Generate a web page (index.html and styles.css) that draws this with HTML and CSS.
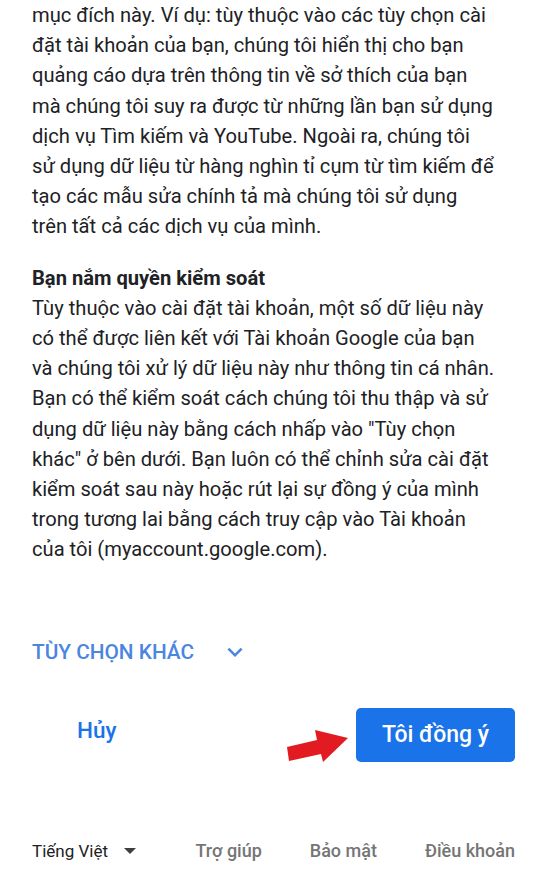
FILE: index.html
```html
<!DOCTYPE html>
<html lang="vi">
<head>
<meta charset="utf-8">
<link rel="stylesheet" href="styles.css">
</head>
<body>
<div class="page">
  <p class="text">mục đích này. Ví dụ: tùy thuộc vào các tùy chọn cài<br>đặt tài khoản của bạn, chúng tôi hiển thị cho bạn<br>quảng cáo dựa trên thông tin về sở thích của bạn<br>mà chúng tôi suy ra được từ những lần bạn sử dụng<br>dịch vụ Tìm kiếm và YouTube. Ngoài ra, chúng tôi<br>sử dụng dữ liệu từ hàng nghìn tỉ cụm từ tìm kiếm để<br>tạo các mẫu sửa chính tả mà chúng tôi sử dụng<br>trên tất cả các dịch vụ của mình.</p>
  <p class="text second"><strong class="heading">Bạn nắm quyền kiểm soát</strong><br>Tùy thuộc vào cài đặt tài khoản, một số dữ liệu này<br>có thể được liên kết với Tài khoản Google của bạn<br>và chúng tôi xử lý dữ liệu này như thông tin cá nhân.<br>Bạn có thể kiểm soát cách chúng tôi thu thập và sử<br>dụng dữ liệu này bằng cách nhấp vào "Tùy chọn<br>khác" ở bên dưới. Bạn luôn có thể chỉnh sửa cài đặt<br>kiểm soát sau này hoặc rút lại sự đồng ý của mình<br>trong tương lai bằng cách truy cập vào Tài khoản<br>của tôi (myaccount.google.com).</p>

  <div class="more">
    <span class="more-label">TÙY CHỌN KHÁC</span>
    <svg class="chevron" width="30" height="30" viewBox="0 0 24 24"><path d="M7.41 8.59 12 13.17l4.59-4.58L18 10l-6 6-6-6z" fill="#4a86e0"/></svg>
  </div>

  <div class="actions">
    <span class="cancel">Hủy</span>
    <span class="agree">Tôi đồng ý</span>
    <svg class="arrow" width="70" height="40" viewBox="0 0 70 40"><polygon points="2,17 32,10 30,0 63,8 38,32 36,24 4,31" fill="#e21b23"/></svg>
  </div>

  <div class="footer">
    <span class="lang">Tiếng Việt <span class="caret"></span></span>
    <div class="links">
      <span class="link">Trợ giúp</span>
      <span class="link">Bảo mật</span>
      <span class="link">Điều khoản</span>
    </div>
  </div>
</div>
</body>
</html>
```

FILE: styles.css
```css
html, body {
  margin: 0;
  padding: 0;
  background: #ffffff;
}
.page {
  width: 549px;
  height: 881px;
  padding: 0 34px 0 32px;
  box-sizing: border-box;
  font-family: Roboto, "Noto Sans", sans-serif;
  color: #202124;
  overflow: hidden;
}
.text {
  margin: 0;
  font-size: 20.15px;
  line-height: 30.2px;
  white-space: nowrap;
}
.second {
  margin-top: 21px;
}
.heading {
  font-weight: 700;
}
.more {
  display: flex;
  align-items: center;
  gap: 26px;
  margin-top: 72px;
  height: 30px;
}
.more-label {
  font-size: 20.8px;
  font-weight: 500;
  color: #4a86e0;
}
.chevron {
  display: block;
  margin-top: 1px;
}
.actions {
  position: relative;
  display: flex;
  align-items: center;
  justify-content: space-between;
  margin-top: 41px;
  height: 54px;
}
.cancel {
  margin-left: 45px;
  margin-bottom: 10px;
  font-size: 22.5px;
  font-weight: 500;
  color: #1a73e8;
}
.agree {
  display: flex;
  align-items: center;
  justify-content: center;
  width: 159px;
  height: 54px;
  border-radius: 5px;
  background: #1a73e8;
  color: #ffffff;
  font-size: 23px;
  font-weight: 500;
}
.arrow {
  position: absolute;
  left: 253px;
  top: 22px;
}
.footer {
  display: flex;
  align-items: center;
  justify-content: space-between;
  margin-top: 74px;
  height: 30px;
}
.lang {
  display: flex;
  align-items: center;
  font-size: 17px;
  color: #202124;
}
.caret {
  display: inline-block;
  margin-left: 16px;
  width: 0;
  height: 0;
  border-left: 6px solid transparent;
  border-right: 6px solid transparent;
  border-top: 6px solid #3c4043;
}
.links {
  display: flex;
  gap: 48px;
}
.link {
  font-size: 18px;
  color: #757575;
  font-weight: 500;
}
```
